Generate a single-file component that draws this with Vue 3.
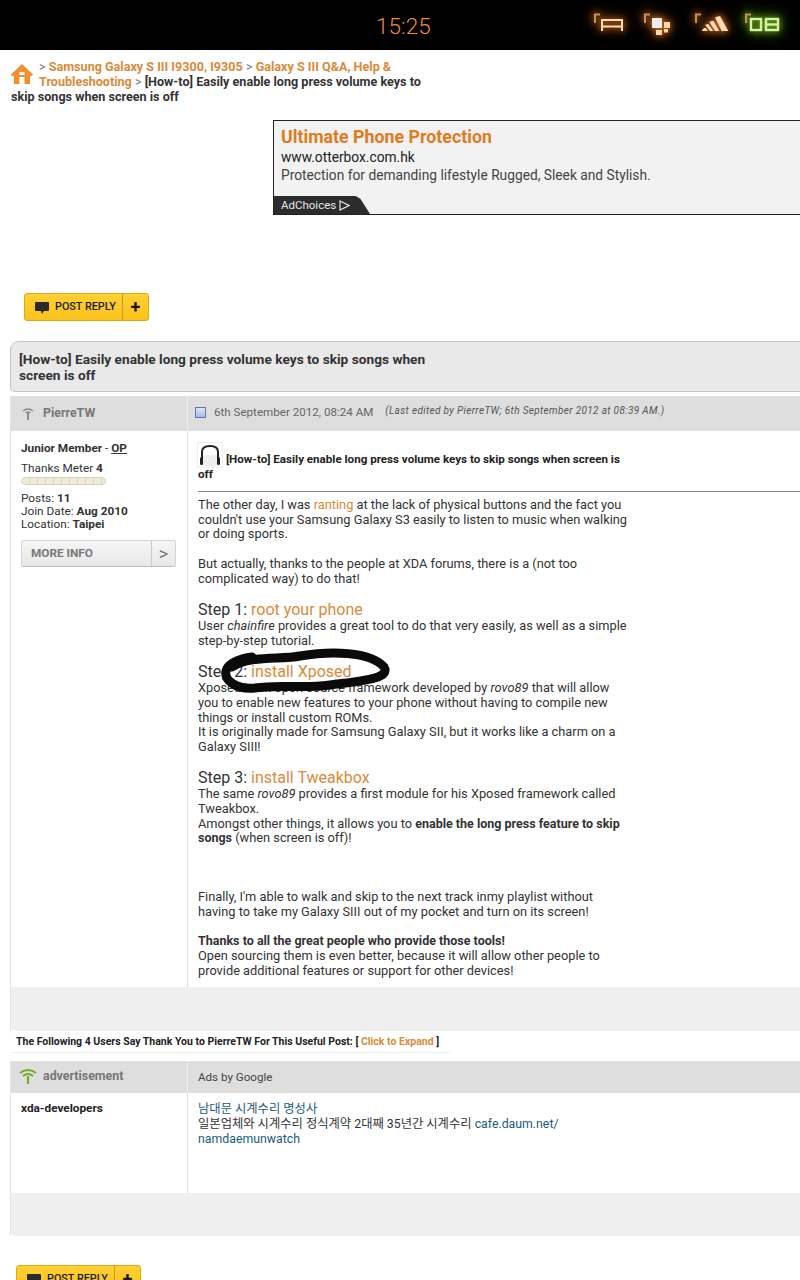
<script setup>
const icons = ['a', 'b', 'c', 'd']
</script>

<template>
  <div class="page">
    <header class="status">
      <span class="time">15:25</span>
      <div class="tray">
        <svg v-for="i in icons" :key="i" class="tray-icon" :class="{ green: i === 'd' }" width="40" height="50" viewBox="0 0 40 50">
          <path d="M1 23V14.500H6" fill="none" stroke="#c5925a" stroke-width="2" />
          <g v-if="i === 'a'" fill="none" stroke="#ffdcb8" stroke-width="2">
            <path d="M8 31V20H28V31M8 26.500H28" />
          </g>
          <g v-if="i === 'b'">
            <rect x="8" y="18" width="10" height="10" fill="#eeeeea" />
            <rect x="20" y="22" width="6" height="6" fill="#ffd9b0" />
            <rect x="12" y="30" width="6" height="5" fill="#ffd9b0" />
            <rect x="20" y="29" width="4" height="3.500" fill="#ffd9b0" />
          </g>
          <g v-if="i === 'c'" fill="#ffdcb8">
            <path d="M6.700 31L9 28H11L12.700 31Z" />
            <path d="M10 24.700L13.300 24L18.300 31H15Z" />
            <path d="M14.300 21.700L18.300 20.700L24.300 31H20Z" />
            <path d="M20 17.300L25 16L33.300 31H26.700Z" />
          </g>
          <g v-if="i === 'd'" fill="none" stroke="#d4f5a0" stroke-width="2.400">
            <rect x="6" y="19" width="10" height="11" />
            <rect x="21" y="19" width="12" height="11" />
            <path d="M21 24.500H33" />
          </g>
        </svg>
      </div>
    </header>

    <nav class="crumbs">
      <svg class="home" width="22" height="22" viewBox="0 0 22 22">
        <path d="M11 1L0 11.500L1 13H3V21H19V13H21L22 11.500Z" fill="#f09030" />
        <rect x="8.500" y="14" width="5" height="7" fill="#fff" />
        <rect x="8.500" y="9" width="5" height="3" fill="#fff" />
      </svg>
      <span class="sep">&gt; </span><a class="crumb">Samsung Galaxy S III I9300, I9305</a><span class="sep"> &gt; </span><a class="crumb">Galaxy S III Q&amp;A, Help &amp; Troubleshooting</a><span class="sep"> &gt; </span><b>[How-to] Easily enable long press volume keys to skip songs when screen is off</b>
    </nav>

    <aside class="ad">
      <div class="ad-title">Ultimate Phone Protection</div>
      <div class="ad-url">www.otterbox.com.hk</div>
      <div class="ad-desc">Protection for demanding lifestyle Rugged, Sleek and Stylish.</div>
      <div class="adchoices">
        AdChoices
        <svg width="11" height="11" viewBox="0 0 11 11"><path d="M1 1L10 5.500L1 10Z" fill="none" stroke="#e8e8e8" stroke-width="1.200" /></svg>
      </div>
    </aside>

    <button class="reply first">
      <span class="reply-main">
        <svg width="16" height="15" viewBox="0 0 16 15"><path d="M2 1H14Q15 1 15 2V9Q15 10 14 10H10L8 13L7 10H2Q1 10 1 9V2Q1 1 2 1Z" fill="#2b2b2b" /></svg>
        POST REPLY
      </span>
      <span class="reply-plus">+</span>
    </button>

    <div class="thread-title">[How-to] Easily enable long press volume keys to skip songs when<br />screen is off</div>

    <section class="post">
      <div class="head">
        <div class="head-left">
          <svg width="14" height="14" viewBox="0 0 14 14"><path d="M2 5Q7 1 12 5M4.500 7Q7 5 9.500 7" fill="none" stroke="#8a8a8a" stroke-width="1.600" /><path d="M7 7V14" stroke="#8a8a8a" stroke-width="2" /></svg>
          <span class="user">PierreTW</span>
        </div>
        <div class="head-right">
          <span class="doc"></span>
          <span class="date">6th September 2012, 08:24 AM</span>
          <em class="edited">(Last edited by PierreTW; 6th September 2012 at 08:39 AM.)</em>
        </div>
      </div>
      <div class="row">
        <div class="side">
          <div class="rank"><b>Junior Member</b> - <b class="op">OP</b></div>
          <div class="thanks">Thanks Meter <b>4</b></div>
          <div class="meter"></div>
          <div class="stats">
            <div class="stat-first">Posts: <b>11</b></div>
            <div>Join Date: <b>Aug 2010</b></div>
            <div>Location: <b>Taipei</b></div>
          </div>
          <div class="more"><span class="more-label">MORE INFO</span><span class="more-arrow">&gt;</span></div>
        </div>
        <div class="body">
          <div class="post-title">
            <span class="avatar">
              <svg width="24" height="24" viewBox="0 0 24 24">
                <rect x="4" y="12" width="16" height="11" fill="#eeeeee" />
                <path d="M4 19V9Q4 3 12 3Q20 3 20 9V19" fill="none" stroke="#222" stroke-width="2" />
                <rect x="2" y="14" width="3" height="8" rx="1.500" fill="#222" />
                <rect x="19" y="14" width="3" height="8" rx="1.500" fill="#222" />
              </svg>
            </span>
            <b> [How-to] Easily enable long press volume keys to skip songs when screen is off</b>
          </div>
          <hr class="rule" />
          <div class="copy">
            <p>The other day, I was <a>ranting</a> at the lack of physical buttons and the fact you<br />couldn't use your Samsung Galaxy S3 easily to listen to music when walking<br />or doing sports.</p>
            <p class="near">But actually, thanks to the people at XDA forums, there is a (not too<br />complicated way) to do that!</p>
            <h3>Step 1: <a>root your phone</a></h3>
            <p class="tight">User <i>chainfire</i> provides a great tool to do that very easily, as well as a simple<br />step-by-step tutorial.</p>
            <h3>Step 2: <a>install Xposed</a></h3>
            <p class="tight">Xposed is an open-source framework developed by <i>rovo89</i> that will allow<br />you to enable new features to your phone without having to compile new<br />things or install custom ROMs.<br />It is originally made for Samsung Galaxy SII, but it works like a charm on a<br />Galaxy SIII!</p>
            <h3>Step 3: <a>install Tweakbox</a></h3>
            <p class="tight">The same <i>rovo89</i> provides a first module for his Xposed framework called<br />Tweakbox.<br />Amongst other things, it allows you to <b>enable the long press feature to skip<br />songs</b> (when screen is off)!</p>
            <p class="gap">Finally, I'm able to walk and skip to the next track inmy playlist without<br />having to take my Galaxy SIII out of my pocket and turn on its screen!</p>
            <p><b>Thanks to all the great people who provide those tools!</b><br />Open sourcing them is even better, because it will allow other people to<br />provide additional features or support for other devices!</p>
          </div>
          <svg class="scribble" width="180" height="50" viewBox="215 648 180 50">
            <path d="M232 667C250 655 280 660 300 656C330 651 370 651 384 667C391 679 360 681 330 685C300 689 280 684 255 688C236 690 224 680 226 671C228 664 238 659 252 657" fill="none" stroke="#0a0a0a" stroke-width="9" stroke-linecap="round" stroke-linejoin="round" />
          </svg>
        </div>
      </div>
      <div class="foot tall"></div>
    </section>

    <div class="thanks-bar"><b>The Following 4 Users Say Thank You to PierreTW For This Useful Post: [ <a>Click to Expand</a> ]</b></div>

    <section class="post advert">
      <div class="head short">
        <div class="head-left">
          <svg class="wifi" width="18" height="16" viewBox="0 0 18 16"><path d="M1 5Q9 -1 17 5M4 8Q9 4 14 8" fill="none" stroke="#6fae2c" stroke-width="2" /><path d="M9 8V16" stroke="#6fae2c" stroke-width="2.200" /></svg>
          <span class="user">advertisement</span>
        </div>
        <div class="head-right"><span class="ads-by">Ads by Google</span></div>
      </div>
      <div class="row ad-row">
        <div class="side"><b>xda-developers</b></div>
        <div class="body">
          <div class="google">
            <a class="blue">남대문 시계수리 명성사</a><br />
            일본업체와 시계수리 정식계약 2대째 35년간 시계수리 <a class="blue">cafe.daum.net/<br />namdaemunwatch</a>
          </div>
        </div>
      </div>
      <div class="foot"></div>
    </section>

    <button class="reply last">
      <span class="reply-main">
        <svg width="16" height="15" viewBox="0 0 16 15"><path d="M2 1H14Q15 1 15 2V9Q15 10 14 10H10L8 13L7 10H2Q1 10 1 9V2Q1 1 2 1Z" fill="#2b2b2b" /></svg>
        POST REPLY
      </span>
      <span class="reply-plus">+</span>
    </button>
  </div>
</template>

<style>
html, body { margin: 0; background: #fff; }
</style>

<style scoped>
.page {
  width: 800px;
  height: 1280px;
  overflow: hidden;
  background: #fff;
  font-family: Roboto, "Noto Sans CJK KR", sans-serif;
  font-size: 13px;
  color: #333;
  position: relative;
}
.status {
  height: 50px;
  background: #000;
  position: relative;
  display: flex;
  justify-content: flex-end;
}
.time {
  position: absolute;
  left: 376px;
  top: 12px;
  font-size: 22.500px;
  line-height: 28px;
  font-weight: 300;
  color: #ee8a3e;
}
.tray { display: flex; gap: 10.500px; padding-right: 15px; }
.tray-icon { filter: drop-shadow(0 0 3px #e0701c) drop-shadow(0 0 6px #a04c10); }
.tray-icon.green { filter: drop-shadow(0 0 3px #7cc020) drop-shadow(0 0 7px #4a8a10); }

.crumbs {
  width: 422px;
  margin: 9px 0 0 11px;
  font-size: 12.600px;
  line-height: 15px;
  height: 61px;
  color: #333;
}
.home { float: left; margin: 0 6px 0 0; height: 30px; }
.sep { color: #777; }
.crumb { color: #d98a3a; font-weight: 700; }
.crumbs b { font-weight: 700; color: #333; }

.ad {
  margin-left: 273px;
  border: solid #222;
  border-width: 1px 0 1px 1px;
  background: #f2f2f2;
  position: relative;
  padding: 5px 0 0 7px;
  height: 88px;
  box-sizing: content-box;
  color: #444;
}
.ad-title { font-size: 17.800px; line-height: 22px; font-weight: 700; color: #e07b1c; }
.ad-url { font-size: 13.750px; line-height: 18px; color: #222; }
.ad-desc { font-size: 13.750px; line-height: 18px; }
.adchoices {
  position: absolute;
  left: 0;
  bottom: 0;
  width: 96px;
  height: 18px;
  box-sizing: border-box;
  padding-left: 7px;
  background: #2c2c2c;
  color: #e6e6e6;
  font-size: 11.500px;
  line-height: 18px;
  clip-path: polygon(0 0, 85% 0, 90% 15%, 100% 100%, 0 100%);
  display: flex;
  align-items: center;
  gap: 3px;
}

.reply {
  display: flex;
  align-items: center;
  padding: 0;
  border: 1px solid #d6a81a;
  border-radius: 3px;
  background: linear-gradient(#ffd034, #fbc31c);
  width: 125px;
  height: 28px;
  font-family: inherit;
  color: #1a1a1a;
  box-sizing: border-box;
}
.reply.first { margin: 78px 0 0 24px; }
.reply.last { margin: 29px 0 0 16px; }
.reply-main {
  display: flex;
  align-items: center;
  gap: 5px;
  width: 98px;
  height: 100%;
  padding: 0 0 1px 9px;
  box-sizing: border-box;
  border-right: 1px solid #c99a14;
  font-size: 10.800px;
  font-weight: 500;
  white-space: nowrap;
}
.reply-main svg { margin-top: 3px; }
.reply-plus { flex: 1; font-size: 18px; font-weight: 700; line-height: 24px; text-align: center; }

.thread-title {
  margin: 20px 0 0 10px;
  height: 51px;
  box-sizing: border-box;
  padding: 9px 0 0 8px;
  background: #e9e9e9;
  border: 1px solid #c4c4c4;
  border-right: 0;
  border-radius: 9px 0 0 5px;
  font-size: 13.700px;
  line-height: 16px;
  font-weight: 700;
  color: #333;
}

.post { margin: 4px 0 0 10px; border-left: 1px solid #e4e4e4; }
.head { display: flex; height: 35px; background: #dedede; }
.head.short { height: 32px; }
.head-left {
  width: 177px;
  box-sizing: border-box;
  padding: 0 0 2px 10px;
  display: flex;
  align-items: center;
  gap: 8px;
  border-right: 1px solid #eee;
}
.head.short .head-left { gap: 6px; padding-bottom: 3px; }
.user { font-size: 12.400px; font-weight: 700; color: #777; }
.head-right { flex: 1; display: flex; align-items: center; padding: 0 0 3px 7px; color: #666; font-size: 11.600px; }
.doc {
  width: 11px;
  height: 11px;
  box-sizing: border-box;
  background: linear-gradient(#dfe6f5, #a9bbe2);
  border: 1px solid #6078b8;
  margin-right: 8px;
}
.edited { margin-left: 12px; font-size: 10px; letter-spacing: 0.350px; margin-top: -4px; color: #555; }

.row { display: flex; height: 556px; }
.side {
  width: 177px;
  box-sizing: border-box;
  padding: 10px 11px 0 10px;
  border-right: 1px solid #dcdcdc;
  font-size: 11.800px;
  line-height: 14px;
  color: #333;
}
.rank { line-height: 14px; }
.op { text-decoration: underline; }
.thanks { margin-top: 6px; }
.meter {
  width: 85px;
  height: 8px;
  margin-top: 2px;
  box-sizing: border-box;
  border: 1px solid #d8d4c4;
  border-radius: 4px;
  background: repeating-linear-gradient(90deg, #f0ecd8 0 7px, #dcd6b8 7px 8px);
}
.stats { line-height: 13px; margin-top: 7px; }
.more {
  display: flex;
  width: 155px;
  height: 27px;
  margin-top: 9px;
  box-sizing: border-box;
  border: 1px solid #d4d4d4;
  border-bottom-color: #bdbdbd;
  border-radius: 3px;
  background: linear-gradient(#f6f6f6, #e8e8e8);
  color: #777;
  align-items: center;
}
.more-label { width: 130px; padding-left: 9px; box-sizing: border-box; font-weight: 700; font-size: 11.800px; border-right: 1px solid #ccc; line-height: 25px; }
.more-arrow { flex: 1; text-align: center; font-size: 18px; }

.body { flex: 1; position: relative; padding: 12px 0 0 10px; min-width: 0; }
.post-title { width: 430px; font-size: 11.600px; line-height: 14px; color: #222; }
.post-title b { font-weight: 700; }
.avatar {
  display: inline-block;
  width: 24px;
  height: 24px;
  vertical-align: -4px;
  outline: 1px solid #eee;
  margin-right: 1px;
}
.avatar svg { display: block; }
.rule { margin: 10px 0 0; border: 0; border-top: 1px solid #888; height: 0; }
.copy { margin-top: 6px; width: 440px; font-size: 12.800px; line-height: 14.700px; color: #333; white-space: nowrap; }
.copy b { font-size: 12.500px; }
.copy p { margin: 0 0 14.700px; }
.copy p.near { margin-bottom: 13.700px; }
.copy p.tight { margin-bottom: 0; }
.copy p.gap { margin-top: 44px; }
.copy h3 { margin: 6px 0 0; font-size: 16px; line-height: 19.500px; font-weight: 400; }
.copy p + h3 { margin-top: 13px; }
.copy a { color: #d98a3a; }
.scribble { position: absolute; left: 27px; top: 217px; }

.foot { height: 43px; background: #efefef; border-radius: 0 0 0 5px; }
.foot.tall { height: 44px; }

.thanks-bar {
  margin: 0 0 0 11px;
  width: 440px;
  height: 22px;
  box-sizing: border-box;
  padding: 4px 0 0 5px;
  font-size: 10.500px;
  line-height: 14px;
  color: #222;
  border-bottom: 1px solid #eee;
}
.thanks-bar a { color: #d98a3a; }
.advert { margin-top: 8px; }
.ad-row { height: 100px; }
.ad-row .side { padding-top: 8px; color: #222; }
.ad-row .body { padding-top: 9px; }
.wifi { margin-left: -2px; }
.ads-by { font-size: 11.600px; padding-left: 3px; color: #444; }
.head.short .head-right { padding: 0 0 1px 7px; }
.google { font-size: 12.300px; line-height: 15px; color: #333; width: 380px; }
.blue { color: #1a5a80; }
</style>
